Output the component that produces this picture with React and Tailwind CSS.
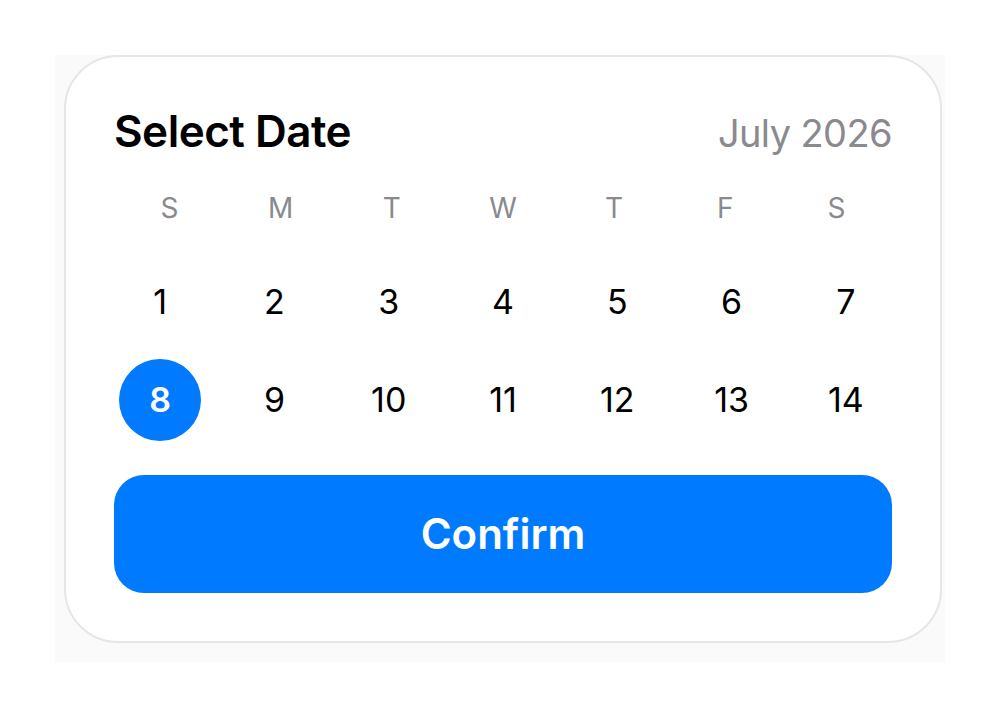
const headers = ["S", "M", "T", "W", "T", "F", "S"];
const weeks = [
  [1, 2, 3, 4, 5, 6, 7],
  [8, 9, 10, 11, 12, 13, 14],
];
const selected = 8;

export default function App() {
  return (
    <div
      className="min-h-[716px] w-[1000px] bg-white pt-[55px] pl-[55px]"
      style={{ fontFamily: "Inter, 'Noto Sans', sans-serif" }}
    >
      <div className="w-[890px] bg-[#fafafa] pl-[9px] pr-[3px] pb-[19px]">
        <div className="w-[878px] rounded-[54px] border-2 border-[#e6e6e6] bg-white px-[48px] pt-[52px] pb-[48px]">
          {/* header */}
          <div className="flex items-baseline justify-between">
            <h1 className="text-[44px] font-semibold leading-none tracking-[-0.5px] text-black">
              Select Date
            </h1>
            <span className="text-[38px] leading-none tracking-[-0.6px] text-[#8a8a8e]">July 2026</span>
          </div>

          {/* weekdays */}
          <div className="mt-[41px] grid grid-cols-7">
            {headers.map((d, i) => (
              <div key={i} className="text-center text-[28px] leading-none text-[#8a8a8e]">
                {d}
              </div>
            ))}
          </div>

          {/* dates */}
          <div className="-mx-[11px] mt-[39px] flex flex-col gap-[16px]">
            {weeks.map((week, wi) => (
              <div key={wi} className="grid grid-cols-7">
                {week.map((n) => (
                  <div key={n} className="flex h-[82px] items-center justify-center">
                    {n === selected ? (
                      <div className="flex h-[82px] w-[82px] items-center justify-center rounded-full bg-[#007aff] text-[34px] font-semibold leading-none text-white">
                        {n}
                      </div>
                    ) : (
                      <span className="text-[34px] leading-none text-black">{n}</span>
                    )}
                  </div>
                ))}
              </div>
            ))}
          </div>

          <button className="mt-[34px] flex h-[118px] w-full items-center justify-center rounded-[30px] bg-[#007aff] text-[42px] font-semibold leading-none text-white">
            Confirm
          </button>
        </div>
      </div>
    </div>
  );
}
